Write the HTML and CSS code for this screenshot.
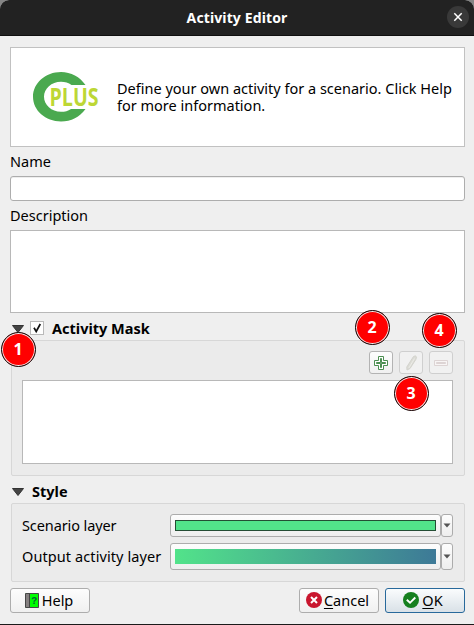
FILE: index.html
```html
<!DOCTYPE html>
<html lang="en">
<head>
<meta charset="utf-8">
<title>Activity Editor</title>
<link rel="stylesheet" href="styles.css">
</head>
<body>
<div class="window">
  <header class="titlebar">
    <h1 class="title">Activity Editor</h1>
    <button class="close" aria-label="Close"><svg width="22" height="22" viewBox="0 0 22 22"><path d="M7.3 7.3l7.4 7.4M14.7 7.3l-7.4 7.4" stroke="#fff" stroke-width="1.5"/></svg></button>
  </header>
  <main class="content">
    <section class="intro">
      <svg class="logo" width="72" height="52" viewBox="0 0 72 52">
        <path d="M53.5 14C48 6 39 1 29 1C13.500 1 1 12 1 25.800S13.500 50.500 29 50.500C39 50.500 48 46 53.500 38H39C36 40 33 40.800 29 40.800C19.500 40.800 12 34 12 25.800S19.500 10.800 29 10.800C33 10.800 36.500 12 39.500 14Z" fill="#4aa94f"/>
        <text class="logo-text" x="17.500" y="35" textLength="49" lengthAdjust="spacingAndGlyphs">PLUS</text>
      </svg>
      <p class="intro-text"><span class="line-a">Define your own activity for a scenario. Click Help</span><br><span class="line-b">for more information.</span></p>
    </section>
    <label class="label name-label">Name</label>
    <div class="input"></div>
    <label class="label desc-label">Description</label>
    <div class="textarea"></div>
    <div class="group-head">
      <svg class="fold" width="12" height="8"><path d="M.5 .5h11L6 7.500z" fill="#444" stroke="#333"/></svg>
      <span class="check"><svg width="14" height="14"><path d="M4 6.800L6.200 10.500L10.300 3" fill="none" stroke="#111" stroke-width="1.700"/></svg></span>
      <b class="mask-title">Activity Mask</b>
      <span class="badge b1">1</span>
    </div>
    <section class="group mask">
      <div class="tools">
        <button class="tool"><svg width="16" height="16"><path d="M5.500 1.500h5v4h4v5h-4v4h-5v-4h-4v-5h4z" fill="#fff" stroke="#4b8e50"/><path d="M7.500 3.500h1v4h4v1h-4v4h-1v-4h-4v-1h4z" fill="#9bc79d" stroke="#4b8e50"/></svg><span class="badge b2">2</span></button>
        <button class="tool off"><svg width="16" height="16"><path d="M10.500 1.500L12.500 .8L13.500 2.300L12.800 4.500L7 13.500L4 15L3.800 12z" fill="#dcdcd6" stroke="#d3d3cd"/><path d="M11.500 3.500L5.800 13" stroke="#ecece7"/></svg><span class="badge b3">3</span></button>
        <button class="tool off"><svg width="16" height="16"><path d="M1.500 5.500h13v5h-13z" fill="#f8f5f5" stroke="#ddd4d4"/><path d="M3.500 7.500h9v1h-9z" fill="#e2dada" stroke="#ddd4d4"/></svg><span class="badge b4">4</span></button>
      </div>
      <div class="list"></div>
    </section>
    <div class="group-head style-head">
      <svg class="fold" width="12" height="8"><path d="M.5 .5h11L6 7.500z" fill="#444" stroke="#333"/></svg>
      <b class="style-title">Style</b>
    </div>
    <section class="group style">
      <div class="row row-a">
        <span class="row-label scenario">Scenario layer</span>
        <button class="picker"><span class="swatch solid"></span></button>
        <button class="drop"><svg width="8" height="5"><path d="M.5 .5h7L4 4.500z" fill="#555"/></svg></button>
      </div>
      <div class="row row-b">
        <span class="row-label output">Output activity layer</span>
        <button class="picker"><span class="swatch ramp"></span></button>
        <button class="drop"><svg width="8" height="5"><path d="M.5 .5h7L4 4.500z" fill="#555"/></svg></button>
      </div>
    </section>
    <footer class="actions">
      <button class="btn help"><svg width="14" height="15"><path d="M.5 .5h13v14H.500z" fill="#0f0" stroke="#474747"/><path d="M1 1h3v13H1z" fill="#858080"/><path d="M4.500 1v13" stroke="#444"/><text class="mark" x="6.300" y="11">?</text></svg><span class="help-text">Help</span></button>
      <button class="btn cancel"><svg width="16" height="16"><circle cx="8" cy="8" r="8" fill="#c9162e"/><path d="M5 5l6 6M11 5l-6 6" stroke="#fff" stroke-width="2"/></svg><span class="cancel-text"><u>C</u>ancel</span></button>
      <button class="btn ok"><svg width="16" height="16"><circle cx="8" cy="8" r="8" fill="#15801f"/><path d="M3.800 7.800L7 10.800L12.300 5.500" fill="none" stroke="#fff" stroke-width="1.900"/></svg><span class="ok-text"><u>O</u>K</span></button>
    </footer>
  </main>
</div>
</body>
</html>
```
FILE: styles.css
```css
* { box-sizing: border-box; }
body { margin: 0; background: #858585; font: 14.5px/17px "Noto Sans", sans-serif; color: #000; }
button { font: inherit; color: inherit; padding: 0; margin: 0; }
svg { display: block; flex: none; }
.window { width: 474px; height: 625px; border-radius: 9px 9px 0 0; overflow: hidden; background: #efefef; border-bottom: 1px solid #1a1a1a; }
.titlebar { height: 36px; background: #222; border-bottom: 1px solid #101010; display: grid; grid-template-columns: 27px 1fr 27px; align-items: center; }
.title { grid-column: 2; margin: 0; text-align: center; font-size: 14px; line-height: 20px; font-weight: 700; letter-spacing: .12px; color: #fff; }
.close { width: 22px; height: 22px; border: 0; border-radius: 50%; background: #393939; margin-bottom: 2px; }
.content { padding: 11px 9px 0 10px; display: flex; flex-direction: column; }
.intro { height: 100px; background: #fff; border: 1px solid #c1c1c1; display: flex; align-items: center; padding-left: 21px; }
.logo { overflow: visible; }
.logo-text { font: 700 25.5px "Open Sans", sans-serif; fill: #bdd735; }
.intro-text { margin: 0 0 0 13px; white-space: nowrap; }
.label { height: 17px; }
.name-label { margin: 6px 0 6px; }
.input { height: 25px; background: #fff; border: 1px solid #adadad; border-radius: 3px; box-shadow: inset 0 1px #eee; }
.desc-label { margin: 6px 0 6px; }
.textarea { height: 83px; background: #fff; border: 1px solid #b8b8b8; }
.group-head { height: 27px; display: flex; align-items: center; position: relative; padding: 4px 0 0 2px; }
.fold { margin-top: 1px; }
.check { width: 14px; height: 14px; background: #fff; outline: 1px solid #b9b9b9; outline-offset: -1px; margin: -1px 8px 0 6px; }
.group { margin-left: 1px; background: #ebebeb; border: 1px solid #d7d7d7; border-radius: 2px; }
.mask { height: 136px; padding: 10px 11px 11px 10px; }
.tools { display: flex; justify-content: flex-end; gap: 6px; height: 23px; margin-bottom: 6px; }
.tool { width: 24px; border: 1px solid #b3b3b3; border-radius: 3px; background: linear-gradient(#fdfdfd, #f0f0f0); position: relative; display: grid; place-items: center; }
.off { border-color: #cfcfcf; background: #f1f1f1; }
.list { height: 84px; background: #fff; border: 1px solid #b8b8b8; }
.badge { position: absolute; width: 35px; height: 35px; border-radius: 50%; background: #f00; border: 1px solid #111; box-shadow: inset 0 0 0 1px #eee; color: #fff; font-size: 16px; font-weight: 700; line-height: 33px; text-align: center; z-index: 2; }
.b1 { left: -9.5px; top: 18.5px; }
.b2 { left: -15.5px; top: -41.7px; }
.b3 { left: -6.5px; top: 23.5px; }
.b4 { left: -8.5px; top: -38.6px; }
.style-head { padding-top: 4px; }
.style-title { margin: -1px 0 0 8px; }
.style { height: 79px; padding: 10px 11px 0 10px; }
.row { display: grid; grid-template-columns: 148px 271px 12px; align-items: center; white-space: nowrap; }
.row-a { height: 23px; margin-bottom: 6px; }
.row-b { height: 27px; }
.scenario { letter-spacing: -.1px; }
.output { letter-spacing: .09px; }
.picker, .drop { height: 100%; border: 1px solid #acacac; border-radius: 3px; background: linear-gradient(#fdfdfd, #eee); }
.picker { padding: 5px 4px; }
.drop { display: grid; place-items: center; }
.swatch { display: block; height: 100%; }
.solid { background: #52e38a; border: 1px solid #244d34; }
.ramp { background: linear-gradient(90deg, #52e38a, #3d7997); }
.actions { display: flex; gap: 6px; margin-top: 6px; }
.btn { width: 80px; height: 25px; border: 1px solid #adadad; border-radius: 3px; background: linear-gradient(#fdfdfd, #f0f0f0); display: flex; align-items: center; justify-content: center; gap: 3px; padding-right: 2px; }
.btn svg { margin-top: -1px; }
.help { margin-right: auto; }
.cancel { gap: 2px; padding-right: 3px; }
.ok { padding-right: 4px; border-color: #28699b; background: linear-gradient(#fafcfd, #d9e1e7); }
.mark { font: 700 10px "Liberation Mono", monospace; fill: #063; }
u { text-decoration-thickness: 1px; text-underline-offset: 2px; }
```
